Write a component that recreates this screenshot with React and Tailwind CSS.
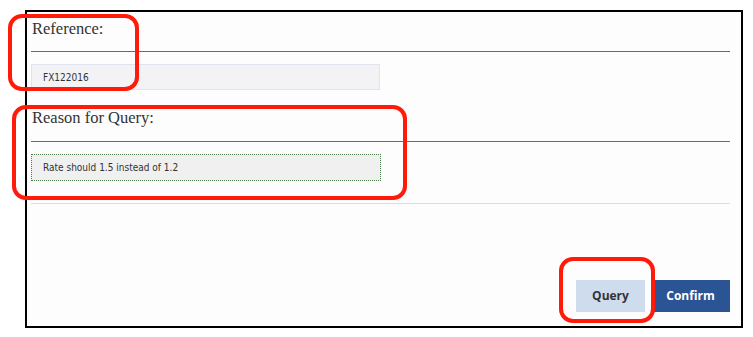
export default function App() {
  return (
    <div className="relative w-[753px] h-[337px] bg-white overflow-hidden">
      {/* dialog frame */}
      <div className="ml-[25px] mt-[10px] w-[718px] h-[318px] border-2 border-black bg-[#fdfdfd] flex flex-col pl-[4px] pr-[11px]">
        <h2 className="mt-[3px] h-[28px] pl-[1px] text-[16.5px] leading-[28px] text-[#333] font-['Liberation_Serif',serif]">
          Reference:
        </h2>
        <div className="mt-[8px] border-t border-[#3a73c0]" />
        <div className="mt-[12px] w-[349px] h-[26px] bg-[#f3f3f6] border border-[#dfe4ee] flex items-center pl-[11px] text-[10px] text-[#333] font-['DejaVu_Sans_Condensed','DejaVu_Sans',sans-serif]">
          FX122016
        </div>
        <h2 className="mt-[14px] h-[28px] pl-[1px] text-[16.5px] leading-[28px] text-[#333] font-['Liberation_Serif',serif]">
          Reason for Query:
        </h2>
        <div className="mt-[9px] border-t border-[#3a73c0]" />
        <div className="mt-[12px] w-[350px] h-[27px] bg-[#f0f0f0] border border-dotted border-[#4d7d4d] flex items-center pl-[11px] text-[10px] text-[#333] font-['DejaVu_Sans_Condensed','DejaVu_Sans',sans-serif]">
          Rate should 1.5 instead of 1.2
        </div>
        <div className="mt-[22px] border-t border-[#dcdcdc]" />
        <div className="flex-1" />
        <div className="flex justify-end gap-[6px] mb-[14px]">
          <button className="w-[69px] h-[32px] bg-[#cfdcee] text-[#333] text-[12px] font-bold font-['Open_Sans',sans-serif]">
            Query
          </button>
          <button className="w-[79px] h-[32px] bg-[#2a5494] text-white text-[12px] font-bold font-['Open_Sans',sans-serif]">
            Confirm
          </button>
        </div>
      </div>

      {/* red annotation marks */}
      <div className="absolute left-[8px] top-[14px] w-[131px] h-[77px] border-4 border-[#ff1a0a] rounded-[14px]" />
      <div className="absolute left-[12px] top-[105px] w-[395px] h-[95px] border-4 border-[#ff1a0a] rounded-[14px]" />
      <div className="absolute left-[559px] top-[257px] w-[96px] h-[66px] border-4 border-[#ff1a0a] rounded-[14px]" />
    </div>
  );
}
